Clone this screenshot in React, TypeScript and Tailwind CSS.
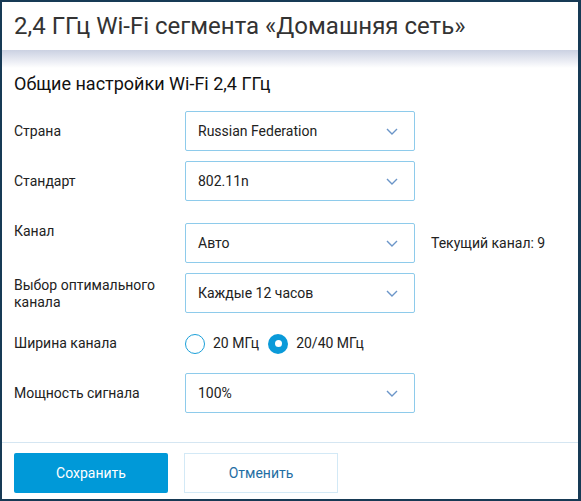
import { useState } from 'react'

function Chevron() {
  return (
    <svg width="12" height="7" viewBox="0 0 12 7" fill="none" className="shrink-0">
      <path d="M1 1l5 5 5-5" stroke="#6b95c8" strokeWidth="1.4" />
    </svg>
  )
}

function Select({ value }: { value: string }) {
  return (
    <div className="flex h-10 w-[230px] items-center justify-between rounded-[2px] border border-[#8ecbeb] bg-white pl-3 pr-4 text-[14px] text-[#222]">
      <span>{value}</span>
      <Chevron />
    </div>
  )
}

function Radio({ checked, label, onClick }: { checked: boolean; label: string; onClick: () => void }) {
  return (
    <button type="button" onClick={onClick} className="flex items-center gap-2">
      {checked ? (
        <span className="flex h-5 w-5 items-center justify-center rounded-full bg-[#0a9ad9]">
          <span className="h-[7px] w-[7px] rounded-full bg-white" />
        </span>
      ) : (
        <span className="h-5 w-5 rounded-full border-[1.5px] border-[#1a9fd9] bg-white" />
      )}
      <span className="text-[14px] text-[#222]">{label}</span>
    </button>
  )
}

export default function App() {
  const [width, setWidth] = useState('20/40')

  return (
    <div className="h-[501px] w-[581px] border-t-2 border-b-2 border-l-2 border-r-[3px] border-[#173a55] bg-white font-['Roboto','Liberation_Sans',sans-serif]">
      <div className="flex h-full flex-col">
        {/* Header */}
        <div className="flex h-[48px] items-center px-3 text-[24px] text-[#333]">
          2,4 ГГц Wi-Fi сегмента «Домашняя сеть»
        </div>
        <div className="h-[18px] bg-gradient-to-b from-[#cbd1e2] to-white" />

        {/* Settings */}
        <div className="flex-1 px-3">
          <h2 className="mt-[5px] text-[18px] leading-[22px] text-[#111]">Общие настройки Wi-Fi 2,4 ГГц</h2>

          <div className="mt-[16px] grid grid-cols-[171px_1fr] items-center text-[14px] text-[#222]">
            <div>Страна</div>
            <Select value="Russian Federation" />

            <div className="mt-[10px]">Стандарт</div>
            <div className="mt-[10px]">
              <Select value="802.11n" />
            </div>

            <div className="mt-[22px] self-start leading-4">Канал</div>
            <div className="mt-[22px] flex items-center gap-4">
              <Select value="Авто" />
              <span className="text-[14px]">Текущий канал: 9</span>
            </div>

            <div className="mt-[10px] self-start pt-[4px] leading-[17px]">
              Выбор оптимального
              <br />
              канала
            </div>
            <div className="mt-[10px]">
              <Select value="Каждые 12 часов" />
            </div>

            <div className="mt-[20px]">Ширина канала</div>
            <div className="mt-[20px] flex items-center gap-[9px]">
              <Radio checked={width === '20'} label="20 МГц" onClick={() => setWidth('20')} />
              <Radio checked={width === '20/40'} label="20/40 МГц" onClick={() => setWidth('20/40')} />
            </div>

            <div className="mt-[19px]">Мощность сигнала</div>
            <div className="mt-[19px]">
              <Select value="100%" />
            </div>
          </div>
        </div>

        {/* Footer */}
        <div className="flex h-[57px] items-start gap-4 border-t border-[#d5e6f2] px-3 pt-[10px]">
          <button className="h-10 w-[154px] rounded-[2px] bg-[#0099d8] text-[14px] text-white">Сохранить</button>
          <button className="h-10 w-[154px] border border-[#d3e9f6] bg-white text-[14px] text-[#1f6ea3]">Отменить</button>
        </div>
      </div>
    </div>
  )
}
